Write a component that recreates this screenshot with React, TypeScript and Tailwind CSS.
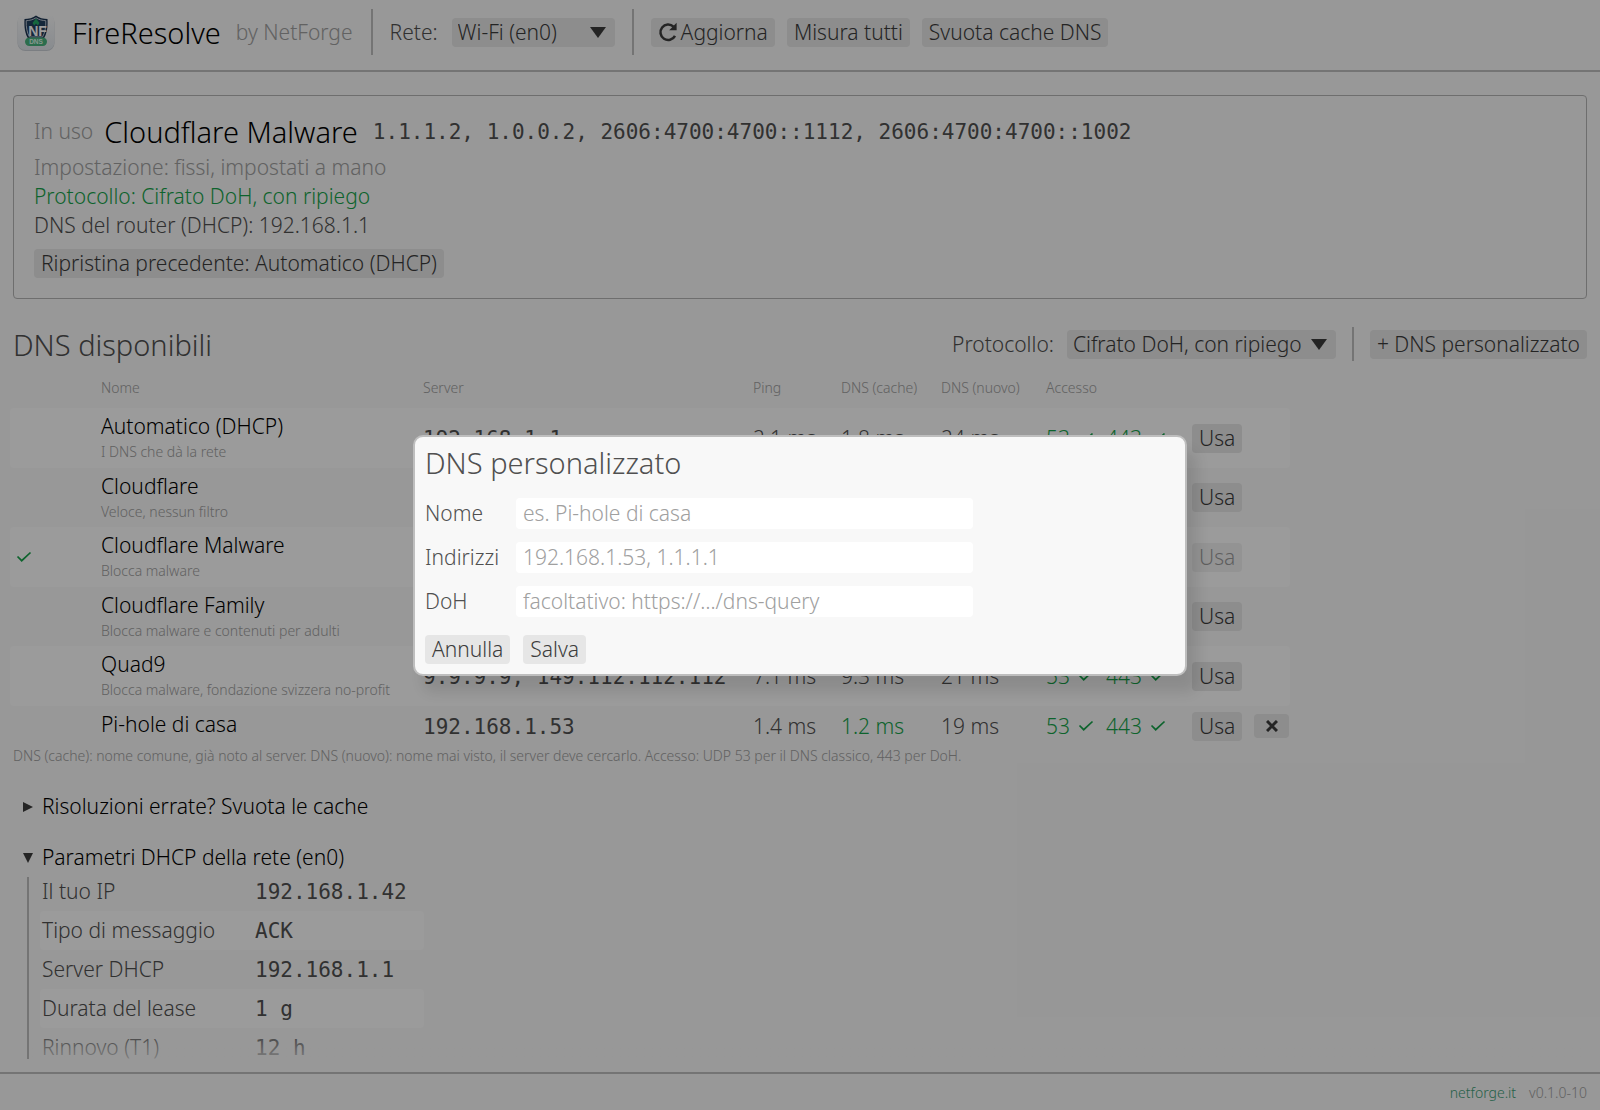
import React from "react";

const btn = "rounded-[4px] bg-[#e6e6e6] text-[#3c3c3c] px-[7px] h-[29px] flex items-center whitespace-nowrap";
const mono = "font-['DejaVu_Sans_Mono',monospace] text-[21px]";

function Caret({ className = "" }: { className?: string }) {
  return (
    <svg viewBox="0 0 16 11" className={"pointer-events-none h-[11px] w-4 fill-[#3c3c3c] " + className} aria-hidden="true">
      <path d="M0 0H16L8 11Z" />
    </svg>
  );
}

function Check() {
  return (
    <svg viewBox="0 0 16 12" className="block h-3 w-4 shrink-0 stroke-[#16a34a]" fill="none" strokeWidth="1.700" aria-hidden="true">
      <path d="M1.500 5.500L5.700 9.700L14.500 1.500" />
    </svg>
  );
}

function Separator({ className = "" }: { className?: string }) {
  return <div className={"w-[2px] shrink-0 bg-[#bebebe] " + className} />;
}

function Logo() {
  return (
    <svg viewBox="0 0 38 38" className="size-[38px]" role="img" aria-label="FireResolve">
      <defs>
        <linearGradient id="tile" x1="0" y1="0" x2="0" y2="1">
          <stop offset="0" stopColor="#f9f9f9" />
          <stop offset="1" stopColor="#dfe4ea" />
        </linearGradient>
      </defs>
      <rect x="0.500" y="1.500" width="37" height="36.500" rx="8" fill="#c9ced4" />
      <rect x="0.500" y="0.500" width="37" height="36.500" rx="8" fill="url(#tile)" />
      <path d="M19 2.500C22 5 26.500 6 30.500 6C31 14 30 21 26.500 26H11.500C8 21 7 14 7.500 6C11.500 6 16 5 19 2.500Z" fill="#1b3350" />
      <path d="M19 4.800C22 6.800 25.500 7.500 28.800 7.700C29 14 28 20 25.500 24H12.500C10 20 9 14 9.200 7.700C12.500 7.500 16 6.800 19 4.800Z" fill="#22405f" stroke="#c9d3de" strokeWidth="0.900" />
      <text x="20.500" y="22.500" textAnchor="middle" fontSize="14" fontWeight="700" fontFamily="Liberation Sans" fill="#fff">NF</text>
      <path d="M19 5.500L22.500 10L20.800 12.500L19 10.500L17.200 12.500L15.500 10Z" fill="#25a866" />
      <rect x="8" y="24.500" width="22" height="8.500" rx="4.200" fill="#47b37f" />
      <text x="19" y="31" textAnchor="middle" fontSize="6.500" fontWeight="700" fontFamily="Liberation Sans" fill="#dff7ea">DNS</text>
    </svg>
  );
}

type Row = {
  name: string; note?: string; server: string; ping: string; cache: string; fresh: string;
  active?: boolean; best?: boolean; custom?: boolean;
};

const rows: Row[] = [
  { name: "Automatico (DHCP)", note: "I DNS che dà la rete", server: "192.168.1.1", ping: "2.1 ms", cache: "1.8 ms", fresh: "24 ms" },
  { name: "Cloudflare", note: "Veloce, nessun filtro", server: "1.1.1.1, 1.0.0.1", ping: "5.2 ms", cache: "6.4 ms", fresh: "18 ms" },
  { name: "Cloudflare Malware", note: "Blocca malware", server: "1.1.1.2, 1.0.0.2", ping: "5.4 ms", cache: "6.6 ms", fresh: "19 ms", active: true },
  { name: "Cloudflare Family", note: "Blocca malware e contenuti per adulti", server: "1.1.1.3, 1.0.0.3", ping: "5.3 ms", cache: "6.8 ms", fresh: "20 ms" },
  { name: "Quad9", note: "Blocca malware, fondazione svizzera no-profit", server: "9.9.9.9, 149.112.112.112", ping: "7.1 ms", cache: "9.3 ms", fresh: "21 ms" },
  { name: "Pi-hole di casa", server: "192.168.1.53", ping: "1.4 ms", cache: "1.2 ms", fresh: "19 ms", best: true, custom: true },
];

const lease: [string, string][] = [
  ["Il tuo IP", "192.168.1.42"],
  ["Tipo di messaggio", "ACK"],
  ["Server DHCP", "192.168.1.1"],
  ["Durata del lease", "1 g"],
  ["Rinnovo (T1)", "12 h"],
];

const fields = [
  { id: "nome", label: "Nome", hint: "es. Pi-hole di casa" },
  { id: "indirizzi", label: "Indirizzi", hint: "192.168.1.53, 1.1.1.1" },
  { id: "doh", label: "DoH", hint: "facoltativo: https://…/dns-query" },
];

export default function App() {
  return (
    <div className="relative flex h-screen flex-col overflow-hidden bg-[#f8f8f8] font-['Noto_Sans',sans-serif] text-[21px] leading-[29px] font-light text-[#505050]">
      <header className="flex h-[72px] shrink-0 items-center border-b-2 border-[#bebebe] pb-[6px] pl-[17px]">
        <Logo />
        <h1 className="ml-[17px] text-[29px] text-black">FireResolve</h1>
        <span className="ml-[15px] text-[#a0a0a0]">by NetForge</span>
        <Separator className="ml-[18px] h-[46px]" />
        <label htmlFor="rete" className="ml-[17px]">Rete:</label>
        <div className="relative ml-[14px]">
          <select id="rete" className="block h-[29px] w-[163px] appearance-none rounded-[4px] bg-[#e6e6e6] px-[6px] text-[#3c3c3c]">
            <option>Wi-Fi (en0)</option>
          </select>
          <Caret className="absolute top-[9px] right-[9px]" />
        </div>
        <Separator className="ml-[17px] h-[46px]" />
        <button className={btn + " ml-[17px] gap-[3px]"}>
          <svg viewBox="0 0 20 20" className="size-5" fill="none" stroke="#3c3c3c" strokeWidth="2.500" aria-hidden="true">
            <path d="M15.500 4.700A7.700 7.700 0 1 0 17 13.800" />
            <path d="M18.600 0.800V8.200H11.200Z" fill="#3c3c3c" stroke="none" />
          </svg>
          Aggiorna
        </button>
        <button className={btn + " ml-[12px]"}>Misura tutti</button>
        <button className={btn + " ml-[12px]"}>Svuota cache DNS</button>
      </header>

      <main className="min-h-0 flex-1 overflow-hidden px-[13px] pt-[23px]">
        <section className="flex h-[204px] flex-col items-start rounded-[4px] border border-[#b4b4b4] px-[20px] pt-[20px]">
          <div className="mb-[7px] flex h-[30px] items-center">
            <span className="text-[#a0a0a0]">In uso</span>
            <h2 className="ml-[11px] text-[29px] text-black">Cloudflare Malware</h2>
            <span className={mono + " ml-[15px] pt-[3px]"}>1.1.1.2, 1.0.0.2, 2606:4700:4700::1112, 2606:4700:4700::1002</span>
          </div>
          <p className="text-[#a0a0a0]">Impostazione: fissi, impostati a mano</p>
          <p className="text-[#16a34a]">Protocollo: Cifrato DoH, con ripiego</p>
          <p>DNS del router (DHCP): 192.168.1.1</p>
          <button className={btn + " mt-[9px]"}>Ripristina precedente: Automatico (DHCP)</button>
        </section>

        <div className="mt-[27px] flex h-[36px] items-center">
          <h2 className="text-[29px]">DNS disponibili</h2>
          <label htmlFor="protocollo" className="ml-auto">Protocollo:</label>
          <div className="relative ml-[13px]">
            <select id="protocollo" className="block h-[29px] w-[269px] appearance-none rounded-[4px] bg-[#e6e6e6] px-[6px] text-[#3c3c3c]">
              <option>Cifrato DoH, con ripiego</option>
            </select>
            <Caret className="absolute top-[9px] right-[9px]" />
          </div>
          <Separator className="mx-[16px] h-[34px]" />
          <button className={btn}>+ DNS personalizzato</button>
        </div>

        <table className="-ml-[3px] w-[1280px] table-fixed border-separate border-spacing-0 text-left">
          <colgroup>
            <col className="w-[91px]" /><col className="w-[322px]" /><col className="w-[330px]" /><col className="w-[88px]" />
            <col className="w-[100px]" /><col className="w-[105px]" /><col className="w-[146px]" /><col className="w-[98px]" />
          </colgroup>
          <thead className="text-[14px] text-[#a0a0a0]">
            <tr className="h-[46px]">
              <th aria-label="In uso" />
              {["Nome", "Server", "Ping", "DNS (cache)", "DNS (nuovo)", "Accesso"].map((h) => (
                <th key={h} className="pt-[4px] pb-0 font-light whitespace-nowrap">{h}</th>
              ))}
              <th aria-label="Azioni" />
            </tr>
          </thead>
          <tbody>
            {rows.map((r) => (
              <tr key={r.name} className={(r.custom ? "h-[40px]" : "h-[60px] even:h-[59px]") + " odd:bg-[#fdfdfd]"}>
                <td className="rounded-l-[4px] p-0 pl-[6px]">{r.active && <Check />}</td>
                <td className="p-0 pt-[4px] align-top whitespace-nowrap">
                  <div className="text-black">{r.name}</div>
                  {r.note && <div className="text-[14px] leading-[22px] text-[#a0a0a0]">{r.note}</div>}
                </td>
                <td className={mono + " p-0 pt-[2px] whitespace-nowrap"}>{r.server}</td>
                <td className="p-0">{r.ping}</td>
                <td className={"p-0 " + (r.best ? "text-[#16a34a]" : "")}>{r.cache}</td>
                <td className="p-0">{r.fresh}</td>
                <td className="p-0 text-[#16a34a]">
                  <div className="flex items-center">
                    53<span className="ml-[8px]"><Check /></span>
                    <span className="ml-[12px]">443</span><span className="ml-[8px]"><Check /></span>
                  </div>
                </td>
                <td className="rounded-r-[4px] p-0">
                  <div className="flex items-center gap-[12px]">
                    <button disabled={r.active} className={btn + " disabled:opacity-50"}>Usa</button>
                    {r.custom && (
                      <button aria-label="Rimuovi" className="flex h-6 w-[35px] items-center justify-center rounded-[4px] bg-[#e6e6e6]">
                        <svg viewBox="0 0 12 12" className="size-3 stroke-[#3c3c3c]" strokeWidth="3"><path d="M1 1L11 11M11 1L1 11" /></svg>
                      </button>
                    )}
                  </div>
                </td>
              </tr>
            ))}
          </tbody>
        </table>
        <p className="text-[14px] leading-[20px] text-[#a0a0a0]">
          DNS (cache): nome comune, già noto al server. DNS (nuovo): nome mai visto, il server deve cercarlo. Accesso: UDP 53 per il DNS classico, 443 per DoH.
        </p>

        <button className="mt-[26px] flex h-[29px] items-center text-black">
          <svg viewBox="0 0 10 10" className="mr-[9px] ml-[10px] size-[10px] fill-[#3c3c3c]"><path d="M0 0L10 5L0 10Z" /></svg>
          Risoluzioni errate? Svuota le cache
        </button>
        <button className="mt-[22px] flex h-[29px] items-center text-black">
          <svg viewBox="0 0 10 10" className="mr-[9px] ml-[10px] size-[10px] fill-[#3c3c3c]"><path d="M0 0H10L5 10Z" /></svg>
          Parametri DHCP della rete (en0)
        </button>
        <div className="relative mt-[5px] ml-[14px] flex h-[182px] overflow-hidden border-l-2 border-[#bebebe] pl-[11px]">
          <dl className="-mt-[5px] w-[384px]">
            {lease.map(([k, v]) => (
              <div key={k} className="flex h-[39px] items-center rounded-[4px] pl-[2px] even:bg-[#fdfdfd]">
                <dt className="w-[213px]">{k}</dt>
                <dd className={mono + " pt-[2px]"}>{v}</dd>
              </div>
            ))}
          </dl>
          <div className="absolute bottom-0 -left-[2px] h-8 w-full bg-linear-to-b from-[#f8f8f8]/0 to-[#f8f8f8]/75" />
        </div>
      </main>

      <footer className="flex h-[38px] shrink-0 items-center justify-end gap-[13px] border-t-2 border-[#bebebe] pr-[13px] text-[14px] text-[#a0a0a0]">
        <a href="https://netforge.it" className="text-[#3f9f78]">netforge.it</a>
        <span>v0.1.0-10</span>
      </footer>

      <div className="absolute inset-0 flex items-center justify-center bg-black/39">
        <div role="dialog" aria-modal="true" aria-labelledby="titolo" className="w-[774px] rounded-[10px] border-2 border-[#bebebe] bg-[#f8f8f8] px-[10px] pt-[8px] pb-[10px] shadow-[10px_16px_13px_rgba(0,0,0,0.1)]">
          <h2 id="titolo" className="text-[29px] leading-[36px]">DNS personalizzato</h2>
          <form className="mt-[17px]">
            <div className="grid grid-cols-[91px_457px] gap-y-[13px]">
              {fields.map((f) => (
                <React.Fragment key={f.id}>
                  <label htmlFor={f.id} className="leading-[31px]">{f.label}</label>
                  <input id={f.id} placeholder={f.hint} className="h-[31px] rounded-[4px] bg-white px-[7px] outline-none placeholder:text-[#a0a0a0]" />
                </React.Fragment>
              ))}
            </div>
            <div className="mt-[18px] flex gap-[13px]">
              <button type="button" className={btn}>Annulla</button>
              <button type="button" className={btn}>Salva</button>
            </div>
          </form>
        </div>
      </div>
    </div>
  );
}
